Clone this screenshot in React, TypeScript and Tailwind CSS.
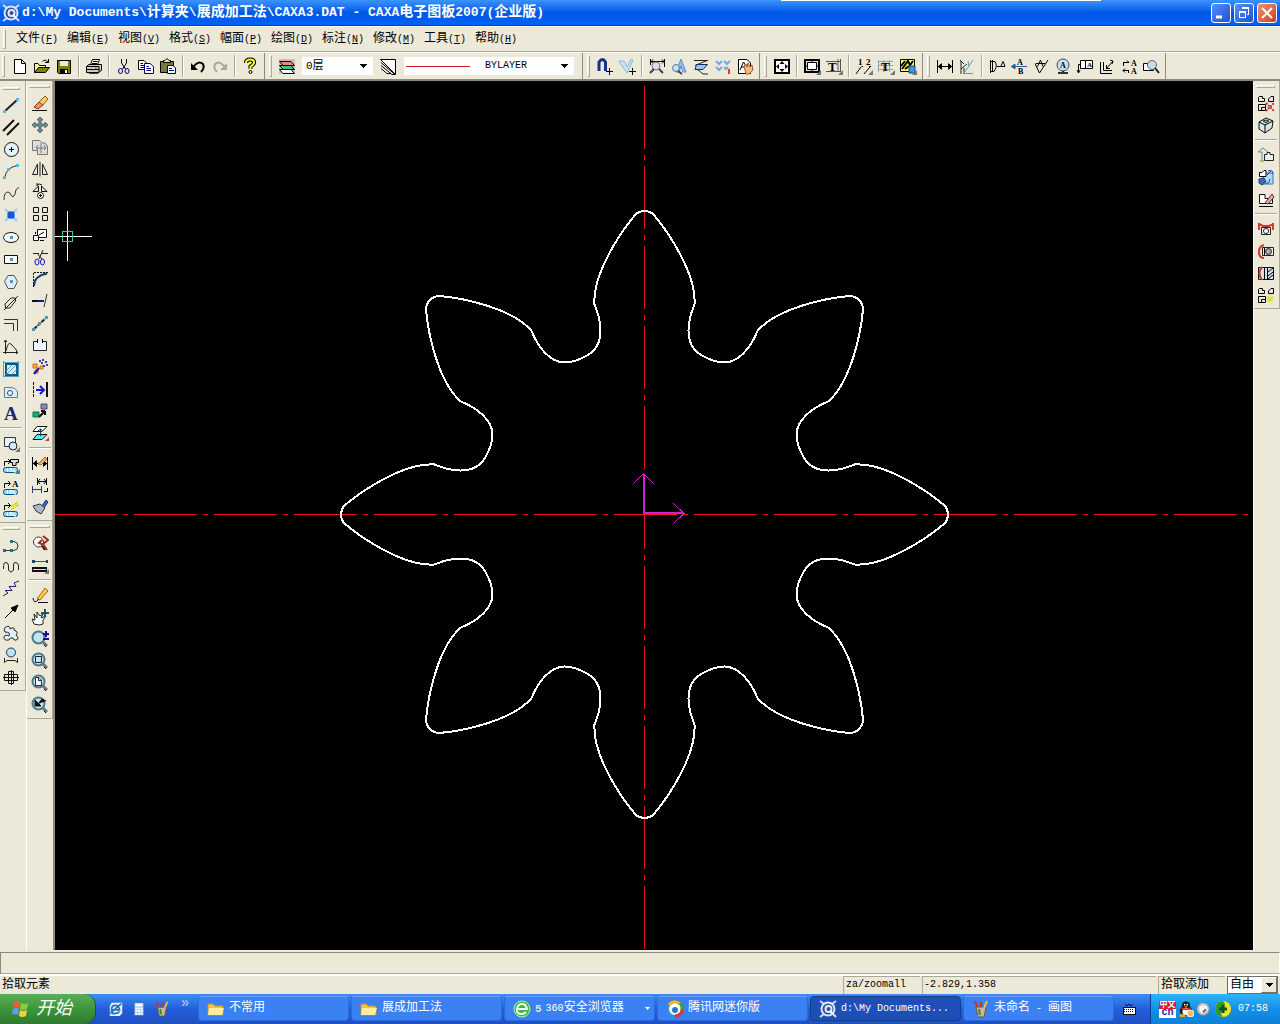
import { Fragment, type ReactNode } from "react";
import { clsx } from "clsx";

const MONO = "font-['Liberation_Mono','Noto_Sans_CJK_SC',monospace]";

const p = (d: string, s = "#000", f = "none", w = 1) => <path d={d} stroke={s} fill={f} strokeWidth={w} />;
const t = (ch: string, x: number, y: number, size = 9, fill = "#000") => (
  <text x={x} y={y} fontSize={size} fill={fill} fontWeight="bold" fontFamily="Liberation Serif, serif">{ch}</text>
);
const lens = (
  <>
    {p("M11 11L16 16", "#777", "none", 3)}
    {p("M13 15L15 17", "#111", "none", 1)}
    <circle cx="7.5" cy="7.5" r="6" fill="#c5e3ee" stroke="#4c7c8c" strokeWidth="2" />
  </>
);
const bars = (c = "#000") => p("M1.5 3V16M16.5 3V16M2 9.5H16M5 7L2.5 9.5L5 12M13 7L15.5 9.5L13 12", c);
const plate = (
  <>
    <rect x="1.5" y="11.5" width="14" height="5" rx="2" fill="#8fd4f4" stroke="#0a5080" />
    {p("M5.5 12V16M8 16V12.5H10V16M12 12.5V16H14", "#fff")}
    {p("M2.5 10V5.5H8M6 3L8.5 5.5L6 8")}
  </>
);
const blocks = p("M1.5 3.5V7.5H7.5V4.5H5.5V2.5H2.5ZM11.5 7.5V5L14 2.5H16.5V7.5ZM1.5 10.5H8.5V16.5H1.5ZM4.5 13.5H8M4.5 13.5V16");
const flyout = p("M18 13V18H13Z", "none", "#777");

const ICONS: Record<string, ReactNode> = {
  New: p("M3.5 2.5H10.5L14.5 6.5V16.5H3.5ZM10.5 2.5V6.5H14.5", "#000", "#fff"),
  Open: <>{p("M1.5 15.5V6.5H5L6.5 8.5H12.5V10.5", "#000", "#ffff9a")}{p("M1.5 15.5L5.5 10.5H16.5L12.5 15.5Z", "#000", "#808000")}{p("M9.5 4.5Q12 1.5 15.5 5.5V2M15.5 5.5H12")}</>,
  Save: <>{p("M2.5 3.5H15.5V16.5H3.5L2.5 15.5Z", "#000", "#808000")}{p("M5 4H13V9H5Z", "none", "#ece9d8")}{p("M5 12H13V16.5H5Z", "none", "#000")}{p("M10 13H12V16H10Z", "none", "#fff")}</>,
  Print: <>{p("M5.5 7.5L7.5 2.5H14.5L12.5 7.5Z", "#000", "#fff")}{p("M8 4.5H12.5M7 6.5H12")}{p("M1.5 9.5L4 7.5H16.5V13L14 15.5H1.5Z", "#000", "#ccc")}{p("M2 9.5H14V15M2 12.5H14")}{p("M4 16.5H13L16 13.5", "#444")}{p("M10 11H12", "#aa0", "none", 2)}</>,
  Cut: <>{p("M6.5 2V6L10.5 12M11.5 2V6L7.5 12")}<ellipse cx="5.5" cy="14" rx="2" ry="2.5" stroke="#000080" fill="none" /><ellipse cx="12" cy="14" rx="2" ry="2.5" stroke="#000080" fill="none" /></>,
  Copy: <>{p("M1.5 3.5H7L9.5 6V12.5H1.5Z", "#000", "#fff")}{p("M3.5 6.5H6M3.5 8.5H7M3.5 10.5H7")}{p("M7.5 6.5H13L16.5 9.5V16.5H7.5Z", "#000080", "#fff")}{p("M9.5 9.5H12M9.5 11.5H14M9.5 13.5H14", "#000080")}</>,
  Paste: <>{p("M1.5 4.5H14.5V15.5H1.5Z", "#000", "#77783c")}{p("M4.5 5.5V3.5H6L8 1.5L10 3.5H11.5V5.5Z", "#000", "#eee88a")}{p("M8.5 8.5H14L16.5 11V16.5H8.5Z", "#000080", "#fff")}{p("M10 11.5H13M10 13.5H15", "#000080")}</>,
  Undo: <>{p("M4 10.5Q9 3 14 7Q16 11 12 15", "#000", "none", 2)}{p("M2 6V13H9Z", "none", "#000")}</>,
  Redo: <>{p("M14 10.5Q9 3 4 7Q2 11 6 15", "#aaa899", "none", 2)}{p("M16 6V13H9Z", "none", "#aaa899")}</>,
  Help: <>{p("M5 6Q5 2.5 9 2.5Q13.5 2.5 13 6Q12 8 9.5 9.5V12", "#000", "none", 4)}{p("M5 6Q5 2.5 9 2.5Q13.5 2.5 13 6Q12 8 9.5 9.5V12", "#ffff20", "none", 2)}<circle cx="9.5" cy="15" r="1.5" fill="#ff0" stroke="#000" /></>,
  Layers: <>{p("M1 2H17V17H1Z", "none", "#c5c2b6")}{p("M1.5 12.5H13L16.5 16.5H5Z", "#000", "#fff")}{p("M1.5 8.5H13L16.5 12.5H5Z", "#000", "#36c878")}{p("M1.5 4.5H13L16.5 8.5H5Z", "#000", "#ff8080")}</>,
  "Layer control": p("M1.5 2.5H16.5V17.5ZM2 5.5L16 17.5M2 8.5L13 17.5H16M2 11.5L8 16.5H12", "#000", "#fff"),
  Magnet: <>{p("M3 14V5Q6.5 0 9.5 5V14", "#12348c", "none", 3)}{p("M10 14.5H17M13.5 11V18", "#000")}</>,
  Guides: <>{p("M1 4H6L9 10L13 2L15 3L9 16Z", "#8ab8e0", "#c8e2f6")}{p("M11 14.5H18M14.5 11V18")}</>,
  "Query distance": <>{p("M2.5 2V8M16.5 2V10M3 4.5H16M5 2.5L3 4.5L5 6.5M14 2.5L16 4.5L14 6.5")}<circle cx="8" cy="9" r="4" stroke="#777" fill="#dde" />{p("M6 12L2 16M11 12L15 16", "#444", "none", 2)}</>,
  "Query text": <>{p("M6 15L11 2L16 15H13L11 9L9 15Z", "#5b8dd6", "#93bdf0")}<circle cx="6" cy="11" r="3.5" fill="#c7dff0" stroke="#607a98" />{p("M8 14L12 17", "#444", "none", 2)}</>,
  "Query layer": <>{p("M2 3.5H16M3 8.5L15 3.5M5 12L11 17H16", "#222")}{p("M4.5 7.5H15.5L11 12.5H3Z", "#112a5c", "#9bc8ee")}</>,
  Pattern: <>{p("M2 4L5 7L8 4M10 4L13 7L16 4M2 10L5 13L8 10M10 10L12 12L14 10", "#78a8e0", "none", 2)}{p("M15 12V17", "#d84020", "none", 2)}</>,
  "Edit text": <>{p("M2.5 2.5H11L14.5 6V16.5H2.5Z", "#000", "#fff")}{p("M4 13L7.5 5L10 9M5 10H8")}{p("M8 9L10 7L11 10L12 6L14 10L16 8L17 13L13 17H10Z", "#9a5620", "#f7b878")}</>,
  Pan: <>{p("M2 3H16V16H2Z", "#000", "#fff", 2)}{p("M9 4L6.5 7H11.5ZM9 15L6.5 12H11.5ZM3 9.5L6 7V12ZM15 9.5L12 7V12Z", "none", "#000")}</>,
  Frame: <>{p("M2 3H16V15H2Z", "#000", "#cfe2f2", 2)}{p("M4.5 5.5H13.5V12.5H4.5Z", "#000", "#fff")}{p("M9 2V6M9 12V15M1 9H5M13 9H17")}{flyout}</>,
  "Title block": <>{p("M1 4.5H15.5V14.5H1M15.5 2V15M13 2V15", "#555")}{t("T", 3, 14, 13)}{flyout}</>,
  Numbering: <>{t("1", 3, 8, 9)}{t("2", 11, 8, 9)}{p("M1 17L6 10M9 17L15 10M6.5 9.5H8M14 9.5H16")}{flyout}</>,
  Table: <>{p("M1.5 4.5H16M1.5 8.5H16M1.5 12.5H16M1.5 3V15M6.5 3V15M12.5 3V15", "#8ba4ba")}{t("T", 4, 14, 13)}{flyout}</>,
  Parts: <>{p("M1.5 2.5H15.5V14.5H1.5Z", "#000", "#ffff60")}{p("M3 12L9 4L11 8L14 4M2 9L6 4M6 12L10 9", "#000", "none", 2)}{p("M10 9H16V16H10Z", "#124a88", "#3f94da")}{flyout}</>,
  Dimension: <>{bars()}{p("M2 9.5L6 6V13ZM16 9.5L12 6V13Z", "none", "#000")}</>,
  Coordinate: <>{p("M2 3L6 7M3 17V4M3 12L9 7M6 17V11", "#222")}{p("M6 16L11 9L10 4M11 9L15 3M5 16.5H15", "#42a8c8")}</>,
  Datum: p("M2.5 3V16M2 4.5H7Q10 9 6 14.5H2M4.5 3V15M9 9.5H17M13 9L15 4.5L17 9"),
  "Datum code": <>{t("A", 7, 8, 8)}{t("B", 8, 17, 8)}{p("M1 9.5H17", "#285aa0")}{p("M1.5 9.5L5 7V12Z", "#285aa0", "#285aa0")}</>,
  Roughness: <>{p("M3 6.5L7.5 16L16 3M4 6.5H13")}{p("M5.5 9.5L8.5 3L11 9.5")}</>,
  "Weld mark": <><circle cx="9" cy="8" r="6" fill="#c7dff0" stroke="#445" />{t("A", 6, 11, 8)}{p("M4 16H14M9 14V17", "#333", "none", 2)}</>,
  Leader: <>{p("M4.5 3.5H16.5V11.5H4.5ZM9.5 4V11", "#000", "#fff")}{t("A", 11, 10, 7)}{p("M2.5 16V7.5H5M1 13L2.5 16L4 13")}</>,
  Section: p("M2.5 5V16.5H14M5.5 5V13.5H14M8 12L15 4M8.5 8V11.5H12M12 3L15 4L14 7"),
  Arrows: <>{t("A", 11, 9, 8)}{t("A", 11, 17, 8)}{p("M3 5.5H9L7 3.5M3.5 5V9M9 13.5H3L5 11.5M5 15.5L3 13.5M8.5 13.5V16")}</>,
  Inspect: <>{p("M1.5 6.5V13.5H11.5V6.5Z", "#000", "#fff")}<circle cx="10" cy="8" r="4.5" fill="#c5dce8" stroke="#567" />{p("M13 11L17 16", "#222", "none", 2)}</>,

  Line: <>{p("M3 15L15 4", "#222", "none", 2)}{p("M1 14H4V17H1ZM14 2H17V5H14Z", "none", "#5cb5df")}</>,
  Parallel: p("M1 13L12 2M5 17L17 5", "#111", "none", 2),
  Circle: <><circle cx="9.5" cy="9.5" r="7" stroke="#111" fill="#e3f3fb" />{p("M7 9.5H12M9.5 7V12", "#000")}</>,
  Arc: <>{p("M3 15Q4 6 15 3.5", "#333")}{p("M1 14H4V17H1ZM5 6H8V9H5ZM14 2H17V5H14Z", "none", "#5cb5df")}</>,
  Spline: p("M2 16Q2 8 6 8Q8 8 9 11Q11 15 13 10Q14 3 17 4", "#333"),
  Point: <>{p("M5.5 5.5H12.5V12.5H5.5Z", "#5c9cff", "#1856d8")}{p("M3 3L6 6M15 3L12 6M3 15L6 12M15 15L12 12", "#a0c8ff", "none", 2)}</>,
  Ellipse: <><ellipse cx="9" cy="9.5" rx="7.5" ry="5" stroke="#111" fill="#f1faff" />{p("M8 8H11V11H8Z", "none", "#4f97c8")}</>,
  Rectangle: <>{p("M2.5 5.5H15.5V13.5H2.5Z", "#111", "#fff")}{p("M8 8H11V11H8Z", "none", "#4f97c8")}</>,
  Polygon: <>{p("M6 3.5H12L15.5 9.5L12 16.5H6L2.5 9.5Z", "#555", "#d9eef6")}{p("M8 8H11V11H8Z", "none", "#4f97c8")}</>,
  "Center line": p("M2 16L16 2M3 10L9 4H13.5V7L8 14H3.5Z", "#222"),
  Offset: p("M2 3.5H15.5V15M2 7.5H11.5V15", "#333"),
  Curve: p("M3.5 2V16M1 14.5H16M2 4L3.5 2L5 4M14 13L16 14.5L14 16M4 13Q6 3 9 6T15 13", "#222"),
  Hatch: <>{p("M4 4H15V15H4Z", "#145580", "#d5f0fb", 2)}{p("M4 11L10 5M4 15L14 5M9 15L15 9M1 2.5H17M1 16.5H17M1.5 1V17M16.5 1V17", "#4b9fc8")}</>,
  "Local view": <>{p("M2.5 15.5V5.5H8Q14 5.5 15.5 10V15.5Z", "#5a8090", "#d9eff6")}<circle cx="8" cy="11" r="2.5" stroke="#345" fill="#fff" /></>,
  Text: t("A", 2, 16, 19, "#1b2a70"),
  Block: <>{p("M2.5 3.5H13.5V12.5H2.5Z", "#333", "#e8f5ff")}<circle cx="11" cy="12" r="4" fill="#d4eaf8" stroke="#123" />{flyout}</>,
  "Library 1": <>{plate}{p("M8.5 3.5H16.5V6.5H14V9.5H10.5V6.5H8.5Z", "#000", "#ddd")}{flyout}</>,
  "Library 2": <>{plate}{t("A", 10, 9, 9)}</>,
  "Library 3": <>{plate}{p("M16 2L9 6H12L9 10L17 5H13Z", "#d8d020", "#ffff20")}</>,
  Fillet: <>{p("M2 14.5H9M9 5.5H12Q16 6 16 10T12 14.5H9", "#333")}{p("M1 13H4V16H1ZM8 13H11V16H8ZM8 4H11V7H8Z", "none", "#1d748e")}</>,
  Wave: p("M1.5 8V11M1.5 7.5Q1.5 4.5 4 4.5T6.5 8V12Q9 16 11.5 12V7Q11.5 4 14 4.5T16.5 8V12", "#222"),
  Break: p("M1 16L6 13L3 10.5H10L7 6.5H14L12 3L17 1", "#232378"),
  Arrow: <>{p("M3 16L12 7", "#000")}{p("M16 3L13 10L9 6Z", "#000", "#000")}</>,
  Contour: p("M3 8Q1 4 4 3Q8 1 8 5Q13 2 12 6Q17 8 14 11Q18 15 14 16Q12 17 11 14Q8 13 7 16Q2 17 2 13Q3 10 7 12Q9 8 3 8", "#222", "#e2f0f8"),
  Bolt: <><circle cx="9" cy="6.5" r="4.5" fill="#b8e5fb" stroke="#234" />{p("M2.5 12V16.5L5 14.5H13L15.5 16.5V12", "#222")}</>,
  Shaft: p("M1 9.5H17M2.5 6.5V12.5H15.5V6.5ZM6.5 3.5V15.5H11.5V3.5ZM9.5 2V17", "#111"),

  Erase: <>{p("M3 13L8 8L12 11L7 15Z", "#8b2d1b", "#ff8b72")}{p("M8 8L14 2L17 5L12 11Z", "#956018", "#ffc861")}{p("M1 16.5H16", "#111")}</>,
  Move: p("M9 1L12 4H10V8H14V6L17 9L14 12V10H10V14H12L9 17L6 14H8V10H4V12L1 9L4 6V8H8V4H6Z", "#536b70", "#718d91"),
  "Copy move": <>{p("M1.5 2.5H9L11.5 5H14L16.5 8V16.5H6.5V12.5H1.5Z", "#777", "#ddd")}{p("M5 10H15M10 5V15M7 7L5 10L7 12M13 7L15 10L13 12", "#777")}</>,
  Mirror: p("M6.5 4V14.5H1.5ZM11.5 4V14.5H16.5ZM9 2V16.5", "#222", "#e7e5d8"),
  Rotate: <>{p("M7.5 9.5V4L2 9.5ZM10.5 9.5V4L16 9.5ZM6 3Q8 1 11 3M6 1V4", "#111")}<circle cx="9.5" cy="13.5" r="3" fill="#fff" stroke="#111" />{p("M8 13.5H11M9.5 12V15")}</>,
  Array: p("M2.5 3.5H7.5V8.5H2.5ZM11.5 3.5H16.5V8.5H11.5ZM2.5 11.5H7.5V16.5H2.5ZM11.5 11.5H16.5V16.5H11.5Z", "#111"),
  Scale: <>{p("M6.5 3.5H15.5V11.5H6.5Z", "#111", "#fff")}{p("M2.5 9.5H7.5V14.5H2.5Z", "#111", "#fff")}{p("M9 14.5H13M4.5 6V8M8 9L13 6")}</>,
  Trim: <>{p("M2 5.5H8M10 5.5H17M12 2L8 11M6 5L11 11", "#222")}<ellipse cx="6" cy="14" rx="2" ry="3" stroke="#1414c0" fill="none" /><ellipse cx="11.5" cy="14" rx="2" ry="3" stroke="#1414c0" fill="none" /></>,
  Corner: <>{p("M3 16Q3 6 16 3.5", "#123b7a", "none", 2)}<path d="M2.5 17V2.5H17" stroke="#111" fill="none" strokeDasharray="2 1" /></>,
  Extend: <>{p("M13 15L16 2", "#333")}{p("M1 9H7", "#111", "none", 2)}{p("M7 9H13", "#1414c0", "none", 2)}</>,
  Stretch: <><path d="M3 15L16 3" stroke="#222" fill="none" strokeWidth="2" strokeDasharray="4 1" />{p("M1 14H4V17H1ZM7 8H10V11H7ZM14 2H17V5H14Z", "none", "#4a9cb8")}</>,
  "Break line": <>{p("M2.5 5.5H7M11 5.5H15.5V14.5H2.5V5.5", "#222", "#edf7ff")}{p("M6.5 3V7M11.5 3V7")}</>,
  Explode: <>{p("M2 6H6V10H2ZM9 8H12V11H9ZM4 12H7V15H4Z", "#d46c18", "#ffb020")}{p("M11 2H13M14 4H16M10 5H12M15 7H17M12 8H14M8 3H10", "#4040b0", "none", 2)}{p("M3 16L8 10", "#1414c0", "none", 2)}</>,
  Align: <>{p("M16 2V17", "#111", "none", 2)}<path d="M2.5 2V17" stroke="#111" fill="none" strokeDasharray="3 1" />{p("M5 10H12M9 6L13 10L9 14", "#1717e8", "none", 2)}</>,
  Match: <>{p("M2 10H8V15H2Z", "#0b7450", "#24a76f")}{p("M10 2H16V7H10Z", "#4c4c78", "#8888af")}{p("M8 15L14 9M14 9H10M14 9V13", "#111", "none", 2)}</>,
  "Swap layers": <>{p("M6 2.5H16L11 7.5H2Z", "#111", "#fff")}{p("M6 10.5H16L11 15.5H2Z", "#111", "#57e8f6")}{p("M9.5 5V12M7 7L9.5 5L12 7", "#145")}{p("M18 13V17H14Z", "none", "#c04040")}</>,
  "Dim edit": <>{bars()}{p("M2 9.5L6 6V13ZM16 9.5L12 6V13Z", "none", "#000")}{p("M7 10L14 3L16 5L10 11Z", "#a56818", "#f7b35c")}</>,
  "Dim style": <>{p("M6.5 2V9M15.5 2V9M7 5.5H15M9 3L7 5.5L9 8M13 3L15 5.5L13 8")}{p("M1.5 10V17M10.5 10V17M2 13.5H10", "#1d38a0")}{p("M13 15.5H16.5V12")}</>,
  Brush: <>{p("M11 8L15 2L17 4L13 10Z", "#1d2b6b", "#4963c0")}{p("M2 8L9 6L14 10L10 16L5 13Z", "#334", "#a9bbca")}</>,
  "Query point": <>{p("M2.5 3.5H11.5V12.5H2.5Z", "none", "#fff")}<circle cx="7.5" cy="8" r="5" fill="#fff" stroke="#333" />{p("M12 2L17 6L12 10L16 16M11 6L8 9L13 11", "#a62d1b", "none", 2)}{p("M11 12L14 16", "#222", "none", 2)}</>,
  Ruler: <>{p("M2 5.5H17", "#2a4ac0")}{p("M1 4H4V7H1ZM15 4H17V7H15Z", "none", "#246")}{p("M1 11H16V16H1Z", "none", "#111")}{p("M2 13.5H15", "#ffe820")}{flyout}</>,
  Pencil: <>{p("M6 13L14 2L17 5L9 14Z", "#a66514", "#ffc84c")}{p("M2 12Q3 19 8 13M7 16.5H17", "#111")}</>,
  Hand: <>{p("M3 16L1 11L4 12L3 6L6 10L6 4L9 8L12 6L10 10L15 8L12 12V16L8 17Z", "#222", "#fff")}{p("M14 1V9M10 5H18", "#1c5960", "none", 2)}</>,
  "Zoom in out": <>{lens}{p("M12 4H18M15 1V7M12 9H18", "#15157d", "none", 2)}</>,
  "Zoom window": <>{lens}{p("M4.5 4.5H10.5V10.5H4.5Z", "#222")}</>,
  "Zoom page": <>{lens}{p("M4.5 3.5H8L10.5 6V11.5H4.5ZM7.5 3.5V6.5H10.5", "#333", "#eef8fa")}</>,
  "Zoom previous": <>{lens}{p("M4 4V10H10ZM7 8L11 3L15 5", "#111", "#111")}</>,

  "Part set": <>{blocks}<path d="M9 9L17 17M9 17L17 9" stroke="#b33c3c" strokeWidth="2" strokeDasharray="2 1" /></>,
  Solid: <>{p("M2 6L9 2L16 5L15 12L8 17L2 13Z", "#111", "#d5e7e7")}{p("M2 6L8 9L16 5M8 9V17")}{p("M6 5L9 4L12 5L9 7Z", "#333", "#88a9aa")}</>,
  "Part move": <>{p("M3 14H7V17H3Z", "none", "#ffe78c")}{p("M3 15H7M5 15V6H1L6 2L11 6", "#6a8d90")}{p("M7.5 8.5H10V6.5H13V8.5H16.5V14.5H7.5Z", "#222", "#e8f2f4")}</>,
  "Part turn": <>{p("M7 5H16V16H5Z", "#357aac", "#a9ddfa")}{p("M2.5 8.5V4.5H5L7 2.5H9V8.5Z", "#000", "#fff")}{p("M2 11L7 10L9 14L5 17L2 15ZM10 7L14 3", "#1e3976", "#4468b4")}{p("M11 3Q16 1 16 6M9 16Q13 15 13 11", "#2040c0")}</>,
  "Part erase": <>{p("M2.5 13.5V4.5H8V8.5H15.5V13.5Z", "#111", "#fff")}{p("M8 13L15 4L17 7L11 14Z", "#713", "#dcb59b")}{p("M2 16.5H16")}</>,
  "Fit 1": <>{p("M4.5 7.5H13.5V14.5H4.5Z", "#222", "#eee")}<circle cx="9" cy="11" r="2.5" stroke="#222" fill="#fff" />{p("M2 3V10M16 3V10M2 4L6 6H12L16 4", "#d43a2a", "none", 2)}</>,
  "Fit 2": <>{p("M5.5 5.5H16.5V13.5H5.5Z", "#222", "#eee")}<circle cx="11.5" cy="9.5" r="3" stroke="#222" fill="#aaa" />{p("M7 3Q2 4 2 10T7 16", "#d43a2a", "none", 2)}{p("M7.5 6V13")}</>,
  "Hatch part": <>{p("M1.5 3.5H16.5V15.5H1.5Z", "#111", "#cde5f0")}{p("M10.5 3V16M7.5 3V16")}{p("M11 8L16 4M11 12L16 8M11 15L16 11")}{p("M5 3Q0 9 5 16", "#d43a2a", "none", 2)}</>,
  "New part": <>{blocks}{p("M13 9V17M9 13H17M10 10L16 16M10 16L16 10", "#d9d61c")}</>,
};

const MENUS = [["文件", "F"], ["编辑", "E"], ["视图", "V"], ["格式", "S"], ["幅面", "P"], ["绘图", "D"], ["标注", "N"], ["修改", "M"], ["工具", "T"], ["帮助", "H"]];

const LEFT_A = ["Line", "Parallel", "Circle", "Arc", "Spline", "Point", "Ellipse", "Rectangle", "Polygon", "Center line", "Offset", "Curve", "Hatch", "Local view", "Text", "|", "Block", "Library 1", "Library 2", "Library 3"];
const LEFT_A2 = ["Fillet", "Wave", "Break", "Arrow", "Contour", "Bolt", "Shaft"];
const LEFT_B = ["Erase", "Move", "Copy move", "Mirror", "Rotate", "Array", "Scale", "Trim", "Corner", "Extend", "Stretch", "Break line", "Explode", "Align", "Match", "Swap layers", "|", "Dim edit", "Dim style", "Brush"];
const LEFT_B2 = ["Query point", "Ruler", "|", "Pencil", "Hand", "Zoom in out", "Zoom window", "Zoom page", "Zoom previous"];
const RIGHT = ["Part set", "Solid", "|", "Part move", "Part turn", "Part erase", "|", "Fit 1", "Fit 2", "Hatch part", "New part"];

// Latin runs are set in a smaller size so that two of them fill one Chinese character
function Mixed({ text, latin = "text-[10px]" }: { text: string; latin?: string }) {
  return (
    <>
      {text.split(/([\u4e00-\u9fff]+)/).map((run, i) => (i % 2 ? <Fragment key={i}>{run}</Fragment> : <span key={i} className={latin}>{run}</span>))}
    </>
  );
}

function ToolButton({ name }: { name: string }) {
  return (
    <button aria-label={name} className="w-[22px] h-[22px] shrink-0 flex items-center justify-center hover:bg-[#c1d2ee]">
      <svg viewBox="0 0 18 18" className="w-[18px] h-[18px]">{ICONS[name]}</svg>
    </button>
  );
}

function Tools({ names, vertical }: { names: string[]; vertical?: boolean }) {
  return (
    <>
      {names.map((n, i) =>
        n === "|" ? (
          <div key={i} className={clsx("shrink-0 flex items-center justify-center", vertical ? "h-2 w-full" : "w-2 h-full")}>
            <div className={clsx("border-[#aca899]", vertical ? "w-[22px] h-0.5 border-t bg-white" : "h-[22px] w-0.5 border-l bg-white")} />
          </div>
        ) : <ToolButton key={i} name={n} />
      )}
    </>
  );
}

function Bar({ children, first }: { children: ReactNode; first?: boolean }) {
  return (
    <div className={clsx("flex items-center border-r border-[#8d8a7c] pr-[3px] shrink-0", first && "-ml-0.5")}>
      <div className="w-[11px] h-full flex items-center pl-1"><div className="w-[3px] h-[22px] border border-l-white border-t-white border-[#aca899]" /></div>
      {children}
    </div>
  );
}

function Column({ names, className }: { names: string[]; className?: string }) {
  return (
    <div className={clsx("flex flex-col items-center border-b border-r border-[#aca899] pb-0.5", className)}>
      <div className="h-[11px] w-full px-0.5 pt-1"><div className="h-[3px] border border-t-white border-l-white border-[#aca899]" /></div>
      <Tools names={names} vertical />
    </div>
  );
}

function Chevron() {
  return <svg viewBox="0 0 7 4" className="w-[7px] h-1 pointer-events-none absolute right-1.5 top-1/2 -mt-0.5" shapeRendering="crispEdges"><path d="M0 0H7L3.5 4Z" /></svg>;
}

function AppIcon() {
  return (
    <svg viewBox="0 0 18 18" className="w-[18px] h-[18px] shrink-0">
      <path d="M1 1L5 4M17 1L13 4M1 17L5 14M13 13L17 17" stroke="#cfdcf4" strokeWidth="2" />
      <circle cx="9" cy="9" r="6.5" fill="#33509c" stroke="#dfe8fa" strokeWidth="2" />
      <circle cx="9.5" cy="9" r="3" fill="none" stroke="#dfe8fa" strokeWidth="2" />
      <path d="M11 11L14 14" stroke="#fff" strokeWidth="2" />
    </svg>
  );
}

const folder = <><path d="M1 4H6L8 6H16V15H1Z" fill="#f3c44c" stroke="#c68f20" /><path d="M2 8H17L15 15H1Z" fill="#ffec9c" /></>;
const brushes = <><path d="M4 7H14L12 17H6Z" fill="#c9b89c" stroke="#68583c" /><path d="M5 7L3 1M9 7V2" stroke="#c73824" strokeWidth="2" /><path d="M12 8L15 1" stroke="#e6c33c" strokeWidth="2" /><path d="M7 9L8 15" stroke="#2f8c42" strokeWidth="2" /></>;

const TASKS: { text: string; icon: ReactNode; active?: boolean; menu?: boolean }[] = [
  { text: "不常用", icon: folder },
  { text: "展成加工法", icon: folder },
  { text: "360安全浏览器", menu: true, icon: <><circle cx="9" cy="9" r="8" fill="#38bd3f" stroke="#b6f3b0" /><path d="M4 9H14Q13 4 9 4T4 9T9 14Q11 14 13 12" stroke="#fff" strokeWidth="2" fill="none" /></> },
  { text: "腾讯网迷你版", icon: <><circle cx="9" cy="9" r="7" fill="#fff" stroke="#259bd8" strokeWidth="2" /><path d="M3 5Q8 -1 14 4" stroke="#f3b91a" strokeWidth="3" fill="none" /><path d="M16 8Q17 15 9 16" stroke="#d9392c" strokeWidth="3" fill="none" /><path d="M14 3Q17 6 16 10" stroke="#35a444" strokeWidth="3" fill="none" /><circle cx="9" cy="10" r="3" fill="#207ad0" /></> },
  { text: "d:\\My Documents...", icon: <AppIcon />, active: true },
  { text: "未命名 - 画图", icon: brushes },
];

// One half of a tooth, tip to root; mirrored and turned around the centre
const HALF_TOOTH = "M0 -303.3C4 -303.3 7 -302.3 9.5 -299.5C25 -281 52 -240 50 -210C47 -203 44 -194 44 -184C44 -166 54 -160 64.5 -155.5";

function Drawing() {
  return (
    <svg viewBox="0 -1 1198 869" preserveAspectRatio="xMidYMid slice" className="flex-1 min-w-0 bg-black" fill="none" shapeRendering="crispEdges">
      <g stroke="#f01020" strokeDasharray="63 6 5 6">
        <path d="M589.5 4V868" />
        <path d="M-1 432.5H1196" />
      </g>
      <g transform="translate(589.5 432.5)" stroke="#fff" strokeWidth="2">
        {[0, 45, 90, 135, 180, 225, 270, 315].map((a) => (
          <g key={a} transform={`rotate(${a})`}>
            <path d={HALF_TOOTH} />
            <path d={HALF_TOOTH} transform="scale(-1 1)" />
          </g>
        ))}
      </g>
      <g stroke="#d020d0">
        <path d="M589 432V392M588 431H629" strokeWidth="2" />
        <path d="M578 402L588.5 391.5L599 402M618 421L629 431.5L618 442" />
      </g>
      <path d="M12.5 129V179M0 154.5H37" stroke="#fff" />
      <path d="M7.5 149.5H17.5V159.5H7.5Z" stroke="#40d080" />
    </svg>
  );
}

export default function App() {
  return (
    <div className={clsx("h-screen flex flex-col bg-[#ece9d8] text-black text-xs leading-4 overflow-hidden", MONO)}>
      <header className="relative h-[26px] shrink-0 flex items-center pl-0.5 pr-[3px] bg-gradient-to-b from-[#3c94ff] via-[#0058e6] to-[#0062fa] text-white border-b border-[#0840b0]">
        <div className="absolute top-0 left-[61%] w-1/4 h-px bg-white" />
        <AppIcon />
        <h1 className="ml-0.5 text-sm leading-5 font-bold whitespace-pre"><Mixed text={"d:\\My Documents\\计算夹\\展成加工法\\CAXA3.DAT - CAXA电子图板2007(企业版)"} latin="text-[13px]" /></h1>
        <div className="ml-auto flex gap-[3px]">
          <button aria-label="Minimize" className="w-5 h-5 rounded-[3px] border border-white bg-gradient-to-br from-[#5a90f8] to-[#1c50d8]"><svg viewBox="0 0 18 18"><path d="M4 13H10" stroke="#fff" strokeWidth="3" /></svg></button>
          <button aria-label="Restore" className="w-5 h-5 rounded-[3px] border border-white bg-gradient-to-br from-[#5a90f8] to-[#1c50d8]"><svg viewBox="0 0 18 18" fill="none" stroke="#fff" shapeRendering="crispEdges"><path d="M7 4.5H13.5V10.5H12M7 3.5H14M4.5 8.5H10.5V13.5H4.5ZM4 7.5H11" /></svg></button>
          <button aria-label="Close" className="w-5 h-5 rounded-[3px] border border-white bg-gradient-to-br from-[#f09078] to-[#d03c14]"><svg viewBox="0 0 18 18"><path d="M4 4L14 14M14 4L4 14" stroke="#fff" strokeWidth="2" /></svg></button>
        </div>
      </header>

      <nav className="h-[26px] shrink-0 flex items-center border-t border-b border-t-white border-b-[#aca899] pl-[3px]">
        <div className="w-[3px] h-5 border border-l-white border-t-white border-[#aca899] mr-[5px]" />
        {MENUS.map(([label, key]) => (
          <button key={key} className="w-[51px] shrink-0 text-left pl-[5px] whitespace-nowrap hover:bg-[#c1d2ee]">{label}<span className="text-[10px]">(<u>{key}</u>)</span></button>
        ))}
      </nav>

      <div className="h-[29px] shrink-0 flex border-t border-t-white border-b-2 border-b-[#8d8a7c]">
        <Bar first><Tools names={["New", "Open", "Save", "|", "Print", "|", "Cut", "Copy", "Paste", "|", "Undo", "Redo", "|", "Help"]} /></Bar>
        <Bar>
          <Tools names={["Layers"]} />
          <div className="relative w-[71px] mx-1 bg-white">
            <select aria-label="Layer" className="appearance-none block w-full h-[18px] pl-1 text-[11px] bg-transparent outline-none"><option>0层</option></select>
            <Chevron />
          </div>
          <Tools names={["Layer control"]} />
          <div className="relative w-[170px] mx-[5px] bg-white">
            <div className="absolute left-0.5 top-1/2 w-16 border-t border-[#d01828] pointer-events-none" />
            <select aria-label="Line type" className="appearance-none block w-full h-[18px] pl-[81px] text-[10px] bg-transparent outline-none"><option>BYLAYER</option></select>
            <Chevron />
          </div>
        </Bar>
        <Bar><Tools names={["Magnet", "Guides", "|", "Query distance", "Query text", "Query layer", "Pattern", "Edit text"]} /></Bar>
        <Bar><Tools names={["Pan", "|", "Frame", "Title block", "|", "Numbering", "Table", "Parts"]} /></Bar>
        <Bar><Tools names={["Dimension", "Coordinate", "|", "Datum", "Datum code", "Roughness", "Weld mark", "Leader", "Section", "Arrows", "Inspect"]} /></Bar>
      </div>

      <main className="flex-1 min-h-0 flex">
        <aside className="flex shrink-0 border-r-2 border-[#8d8a7c]">
          <div className="w-[26px]"><Column names={LEFT_A} className="pt-0.5 pr-[3px]" /><Column names={LEFT_A2} className="pr-[3px]" /></div>
          <div className="w-[27px] border-l border-white"><Column names={LEFT_B} /><Column names={LEFT_B2} /></div>
        </aside>
        <Drawing />
        <aside className="w-[27px] shrink-0 border-l border-white"><Column names={RIGHT} className="pr-0.5" /></aside>
      </main>

      <footer className="shrink-0">
        <div className="mt-0.5 h-[22px] border border-[#8d8a7c] border-r-white border-b-[#aca899]" />
        <div className="h-5 flex items-center gap-0.5 border-t-2 border-white pr-0.5">
          <span className="flex-1 pl-0.5">拾取元素</span>
          <span className="w-[77px] h-full border-l border-t border-[#aca899] pl-0.5 text-[10px]">za/zoomall</span>
          <span className="w-[234px] h-full border-l border-t border-[#aca899] pl-px text-[10px]">-2.829,1.358</span>
          <span className="w-[67px] h-full border-l border-t border-[#aca899] pl-0.5">拾取添加</span>
          <div className="relative w-[51px] h-full bg-white border border-[#716f64]">
            <select aria-label="Snap mode" className="relative z-10 appearance-none block w-full h-full pl-0.5 bg-transparent outline-none"><option>自由</option></select>
            <div className="absolute right-0 inset-y-0 w-4 bg-[#ece9d8] border border-white border-r-[#716f64] border-b-[#716f64]" />
            <div className="absolute inset-y-0 -right-0.5 w-4"><Chevron /></div>
          </div>
        </div>

        <div className="h-[30px] flex items-center bg-gradient-to-b from-[#3f8cf3] via-[#245edb] to-[#1e50c0] text-white">
          <button className="w-24 h-full shrink-0 flex items-center pl-2.5 gap-1.5 rounded-r-xl bg-gradient-to-b from-[#5eac56] via-[#3c963c] to-[#2e7a2e] border-r border-[#1c5a20]">
            <svg viewBox="0 0 20 20" className="w-5 h-5">
              <path d="M4 3Q7 1 10 3L9 9Q6 7 3 9Z" fill="#f0602c" /><path d="M11 4Q14 6 18 4L17 10Q13 12 10 10Z" fill="#8ccc3c" />
              <path d="M3 10Q6 8 9 10L8 16Q5 14 2 16Z" fill="#5c9cf4" /><path d="M10 11Q13 13 17 11L16 17Q12 19 9 17Z" fill="#fccc3c" />
            </svg>
            <span className="text-lg leading-6 italic">开始</span>
          </button>
          <div className="w-[102px] shrink-0 flex items-center pl-3 gap-[7px]">
            <button aria-label="Browser"><svg viewBox="0 0 18 18" className="w-4 h-4"><path d="M4 2H16V14L13 17H2V6Z" fill="#e8f2fc" /><path d="M4 10H13Q12 5 8 5T4 10T8 14Q11 14 13 12M3 14Q1 15 15 3" stroke="#2274bc" strokeWidth="2" fill="none" /></svg></button>
            <button aria-label="Calculator"><svg viewBox="0 0 18 18" className="w-4 h-4"><path d="M3.5 1.5H14.5V16.5H3.5Z" fill="#aacdf5" stroke="#3465ad" /><path d="M5 3H13V6H5Z" fill="#f4fbff" /><path d="M5 8.5H13M5 11.5H13M5 14.5H13" stroke="#fff" strokeWidth="2" strokeDasharray="2 1" /></svg></button>
            <button aria-label="Paint"><svg viewBox="0 0 18 18" className="w-4 h-4">{brushes}</svg></button>
            <span className="ml-1 -mt-3 text-sm text-[#b8d4fc]">»</span>
          </div>
          <div className="flex-1 min-w-0 h-full flex gap-0.5 pt-0.5 pb-[3px]">
            {TASKS.map((task) => (
              <button key={task.text} className={clsx("flex-1 max-w-[151px] min-w-0 flex items-center gap-1 pl-2 pr-1 rounded-sm whitespace-nowrap overflow-hidden border", task.active ? "bg-[#1e4fb8] border-[#173d92]" : "bg-[#3c81f3] border-[#2b6ae0] border-t-[#6aa4ff]")}>
                <svg viewBox="0 0 18 18" className="w-[18px] h-[18px] shrink-0">{task.icon}</svg>
                {task.menu && <b className="text-[11px] text-[#e2e0d8]">5</b>}
                <span className="truncate"><Mixed text={task.text} /></span>
                {task.menu && <svg viewBox="0 0 5 3" className="w-[5px] h-[3px] ml-auto"><path d="M0 0H5L2.5 3Z" fill="#fff" /></svg>}
              </button>
            ))}
          </div>
          <button aria-label="Keyboard" className="w-9 shrink-0 flex pl-2"><svg viewBox="0 0 14 14" className="w-3.5 h-3.5" shapeRendering="crispEdges"><path d="M1 5H13V12H1Z" fill="#fff" stroke="#111" /><path d="M2 7.5H12M2 9.5H12" stroke="#111" strokeDasharray="1 1" /><path d="M3 2L5 4L7 2L9 4L11 2" stroke="#111" fill="none" /></svg></button>
          <div className="w-[130px] h-full shrink-0 flex items-center gap-0.5 pl-2 bg-gradient-to-b from-[#2fb4f8] via-[#1290e8] to-[#0f80d8] border-l border-[#0c3c8c]">
            <span className="w-[17px] h-[17px] bg-white flex flex-col text-[8px] leading-[8px] font-bold overflow-hidden"><span className="bg-[#d81c2c] h-2 text-center">中文</span><span className="text-[#1c1cb0] text-center text-[10px]">cn</span></span>
            <svg viewBox="0 0 18 18" className="w-4 h-4"><ellipse cx="9" cy="11" rx="7" ry="6" fill="#181818" /><circle cx="9" cy="5" r="4.5" fill="#181818" /><ellipse cx="9" cy="12" rx="4" ry="4" fill="#fff" /><circle cx="7.5" cy="4" r="1" fill="#fff" /><circle cx="10.5" cy="4" r="1" fill="#fff" /><path d="M4 8Q9 11 14 8" stroke="#e02c1c" strokeWidth="2" fill="none" /><path d="M7 6H11L9 8ZM2 15H8V18H2Z" fill="#f8a81c" /><circle cx="14" cy="14" r="4" fill="#f8b860" stroke="#fff" /></svg>
            <svg viewBox="0 0 18 18" className="w-4 h-4"><circle cx="8" cy="9" r="7" fill="#c8ccd0" stroke="#888" /><path d="M5 9H12Q11 6 8 6T5 9T8 13" stroke="#fff" strokeWidth="2" fill="none" /><path d="M11 9L8 13" stroke="#666" strokeWidth="2" /></svg>
            <svg viewBox="0 0 18 18" className="w-[18px] h-[18px]"><circle cx="9" cy="9" r="8" fill="#f4e21c" /><path d="M9 1A8 8 0 0 0 9 17Q5 13 9 9T9 1" fill="#2c9c34" /><path d="M9 5V13M5 9H13" stroke="#14501c" strokeWidth="3" /></svg>
            <time className="ml-1 text-[10px] whitespace-nowrap">07:58</time>
          </div>
        </div>
      </footer>
    </div>
  );
}
